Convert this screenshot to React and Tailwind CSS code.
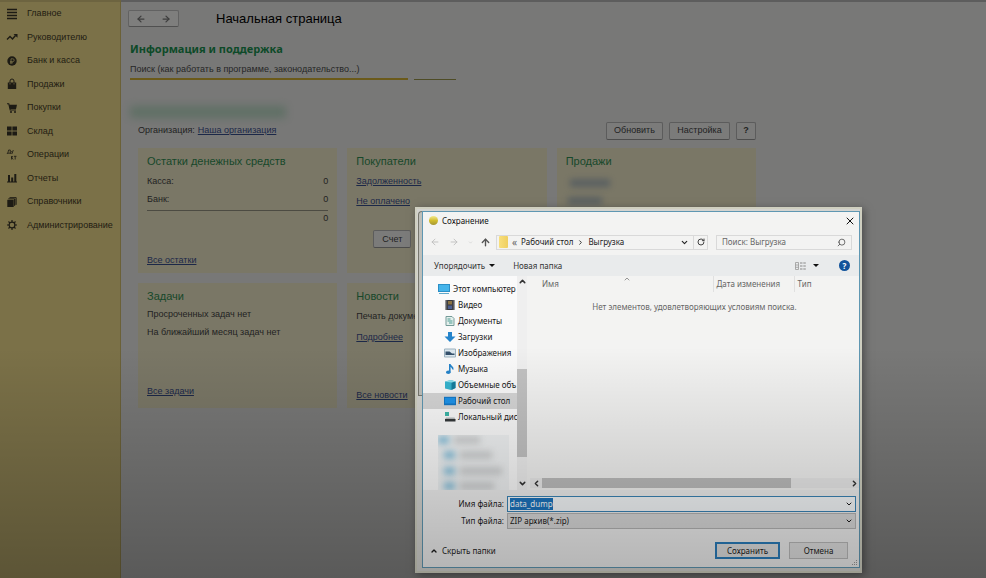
import React, { useEffect, useRef } from 'react';
import { ArrowLeft, ArrowRight, ArrowUp, ChevronDown, ChevronUp, ChevronLeft, ChevronRight, RotateCw, Search, X } from 'lucide-react';

const SECTIONS = [
  { id: 'main', label: 'Главное' },
  { id: 'manager', label: 'Руководителю' },
  { id: 'bank', label: 'Банк и касса' },
  { id: 'sales', label: 'Продажи' },
  { id: 'purchases', label: 'Покупки' },
  { id: 'stock', label: 'Склад' },
  { id: 'operations', label: 'Операции' },
  { id: 'reports', label: 'Отчеты' },
  { id: 'catalogs', label: 'Справочники' },
  { id: 'admin', label: 'Администрирование' },
];

const FOLDERS = [
  { id: 'video', label: 'Видео' },
  { id: 'docs', label: 'Документы' },
  { id: 'downloads', label: 'Загрузки' },
  { id: 'images', label: 'Изображения' },
  { id: 'music', label: 'Музыка' },
  { id: 'objects', label: 'Объемные объ' },
  { id: 'desktop', label: 'Рабочий стол', active: true },
  { id: 'disk', label: 'Локальный дис' },
];

const SectionIcon = ({ id }) => {
  const getShape = () => {
    switch (id) {
      case 'main':
        return <path d="M0 .5h10M0 3.500h10M0 6.500h10M0 9.500h10" stroke="currentColor" strokeWidth="1.300" />;
      case 'manager':
        return (
          <>
            <path d="M0 7.500l3-3 2.500 2.500L8.500 3.500" fill="none" stroke="currentColor" strokeWidth="1.4" />
            <path d="M6.500 2H10.500v3.800z" fill="currentColor" />
          </>
        );
      case 'bank':
        return (
          <>
            <circle cx="5" cy="5" r="4.7" fill="currentColor" />
            <path d="M4 8V2.8h1.8a1.4 1.4 0 010 2.8H3M3 6.8h3" fill="none" stroke="#7b7148" strokeWidth=".8" />
          </>
        );
      case 'sales':
        return (
          <>
            <path d="M.8 3.5h8.4V10H.8z" fill="currentColor" />
            <path d="M3 5V2a2 2 0 014 0v3" fill="none" stroke="currentColor" />
            <path d="M3 4v1.500M7 4v1.500" stroke="#7b7148" strokeWidth=".7" />
          </>
        );
      case 'purchases':
        return (
          <>
            <path d="M0 .8h1.8L3.2 7H9" fill="none" stroke="currentColor" strokeWidth="1.1" />
            <path d="M2 1.7h8L9 6H3z" fill="currentColor" />
            <circle cx="4" cy="9" r="1" fill="currentColor" />
            <circle cx="8" cy="9" r="1" fill="currentColor" />
          </>
        );
      case 'stock':
        return <path d="M0 .5h4.6v4H0zM5.4.5H10v4H5.4zM0 5.4h4.6v4H0zM5.4 5.4H10v4H5.4z" fill="currentColor" />;
      case 'operations':
        return (
          <path
            d="M.3 4V3.200h.5L1.600 0h1.700v3.200h.6V4M.8 3.200h2.500M4.500 1l.8 1.800L6.300 0M5.300 2.800L4.800 4M4.500 6v3.500M4.500 8L6 6M4.800 7.600L6.200 9.500M7 6.300h2.500M8.200 6.300v3.200"
            fill="none"
            stroke="currentColor"
            strokeWidth=".8"
          />
        );
      case 'reports':
        return <path d="M1 2h2v7H1zM4.200 4.500h2V9h-2zM7.300 1h2v8h-2zM0 8.500h10v1H0z" fill="currentColor" />;
      case 'catalogs':
        return (
          <>
            <path d="M.3 2.800h6.400V10H.3z" fill="currentColor" />
            <path d="M1.300 1.800h6.200v7M2.500.6h6.700v7.200" fill="none" stroke="currentColor" strokeWidth=".9" />
            <path d="M7.400 1.800h1.500v6.500H7.400z" fill="currentColor" opacity=".5" />
          </>
        );
      default:
        return (
          <>
            <circle cx="5" cy="5" r="2.900" fill="none" stroke="currentColor" strokeWidth="1.200" />
            <path
              d="M5 0v2M5 8v2M0 5h2M8 5h2M1.500 1.500l1.300 1.300M7.200 7.200l1.300 1.300M8.500 1.500L7.200 2.800M2.800 7.200L1.500 8.500"
              stroke="currentColor"
              strokeWidth="1.200"
            />
          </>
        );
    }
  };

  return (
    <svg viewBox="0 0 10 10" className="size-[10px] shrink-0 overflow-visible text-[#1d1b14]">
      {getShape()}
    </svg>
  );
};

const FolderIcon = ({ id }) => {
  const getShape = () => {
    switch (id) {
      case 'computer':
        return (
          <>
            <path d="M0 0h12v8H0z" fill="#2b8fc6" />
            <path d="M1 1h10v6H1z" fill="#45b4ea" />
            <path d="M1 9.500h10" stroke="#5fa9cc" />
          </>
        );
      case 'video':
        return (
          <>
            <path d="M1.500 0h9v10h-9z" fill="#33353c" />
            <path d="M4 1h4v3.500H4z" fill="#8a7345" />
            <path d="M4 5.500h4V9H4z" fill="#4c5f91" />
            <path d="M2.700.5v9M9.300.5v9" stroke="#999" strokeDasharray="1 1" />
          </>
        );
      case 'docs':
        return (
          <>
            <path d="M2 .5h6L10 2.500v7H2z" fill="#e4efec" stroke="#749b98" />
            <path d="M3.500 3h3M3.500 5h5M5 7h3.500" stroke="#4b9b92" />
          </>
        );
      case 'downloads':
        return <path d="M4 0h4v4.500h3.500L6 10 .5 4.500H4z" fill="#2584cb" />;
      case 'images':
        return (
          <>
            <path d="M.5 1h11v8H.5z" fill="#dbe7ee" stroke="#9db3c0" />
            <path d="M1.500 3.500h4L8 5.500h2.500v1.500h-9z" fill="#34506b" />
          </>
        );
      case 'music':
        return (
          <>
            <path d="M5.800 0v8M5.800 0c0 2.500 3.500 2.500 3 5.500" fill="none" stroke="#2584cb" strokeWidth="1.600" />
            <ellipse cx="4.300" cy="8.300" rx="2.300" ry="1.700" fill="#2584cb" />
          </>
        );
      case 'objects':
        return (
          <>
            <path d="M1 1.500L7 0l4.500 1.500V8L7 10 1 8.500z" fill="#35b4cf" />
            <path d="M7.500 2.500l4-1V8l-4 2z" fill="#167e9d" />
            <path d="M1 1.500L7 0l4.500 1.500-4 1z" fill="#8fe0ec" />
          </>
        );
      case 'desktop':
        return (
          <>
            <path d="M0 .8h12v8.400H0z" fill="#1577c4" />
            <path d="M1 1.800h10v5.700H1z" fill="#1d93ea" />
          </>
        );
      default:
        return (
          <>
            <path d="M1 0h4v4H1z" fill="#3cb6a8" />
            <path d="M2 5.500h8.500l1 2H1z" fill="#b6bbbd" />
            <path d="M1 7h10.500v2.500H1z" fill="#34383a" />
          </>
        );
    }
  };

  return (
    <svg viewBox="0 0 12 10" className="h-[10px] w-3 shrink-0">
      {getShape()}
    </svg>
  );
};

const TextLink = ({ children }) => (
  <a href="#" className="text-[#1c2848] underline underline-offset-1">
    {children}
  </a>
);

const GrayButton = ({ children, className = '' }) => (
  <button
    className={`h-[18px] rounded-[2px] border border-[#5c5c5c] border-b-[#4c4c4c] bg-[#7b7b7a] text-[9px] text-[#222] ${className}`}
  >
    {children}
  </button>
);

const Card = ({ title, children }) => (
  <section className="flex flex-col bg-[#7a7766] px-[9px] pt-[5px]">
    <h3 className="mb-px text-[11px] leading-4 text-[#17482a]">{title}</h3>
    {children}
  </section>
);

const Sidebar = () => (
  <nav className="w-[121px] shrink-0 border-t-2 border-r border-t-[#6d6440] border-r-[#6b6138] bg-[#7b7148]">
    <ul className="grid h-[235px] auto-rows-fr">
      {SECTIONS.map((item) => (
        <li key={item.id} className="flex">
          <a href="#" className="flex items-center gap-[10px] pl-[7px] text-[9px] text-[#1f1c12]">
            <SectionIcon id={item.id} />
            {item.label}
          </a>
        </li>
      ))}
    </ul>
  </nav>
);

const HomePage = () => (
  <main className="min-w-0 flex-1 border-t-2 border-[#5d5d5d] pl-[7px]">
    <div className="flex h-[33px] items-center">
      <div className="flex h-[17px] w-[51px] items-center rounded-[2px] border border-[#626262] border-b-[#505050] bg-[#7e7e7d] text-[#3e3e3e]">
        <button aria-label="Назад" className="flex flex-1 justify-center">
          <ArrowLeft size={10} strokeWidth={3} />
        </button>
        <button aria-label="Вперед" className="flex flex-1 justify-center">
          <ArrowRight size={10} strokeWidth={3} />
        </button>
      </div>
      <h1 className="ml-[37px] text-[13px] text-black">Начальная страница</h1>
    </div>

    <div className="pl-[2px]">
      <h2 className="mt-[6px] font-['Noto_Sans','Liberation_Sans',sans-serif] text-[11px] leading-4 font-bold text-[#0d4a28]">
        Информация и поддержка
      </h2>
      <div className="mt-[4px] flex items-end gap-[6px]">
        <input
          type="text"
          aria-label="Поиск"
          placeholder="Поиск (как работать в программе, законодательство...)"
          className="h-[19px] w-[278px] border-b-2 border-[#6b5a1a] pb-px text-[9px] outline-none placeholder:text-[#262626]"
        />
        <span className="w-[42px] border-b border-[#4e4c26]" />
      </div>
      <div className="mt-[26px] h-3 w-[156px] bg-[#4f6a59] opacity-60 blur-[4px]" />
    </div>

    <div className="ml-[10px] max-w-[618px]">
      <div className="mt-[4px] flex h-[18px] items-center text-[9px] text-[#222]">
        <span className="mr-[3px]">Организация:</span>
        <TextLink>Наша организация</TextLink>
        <div className="ml-auto flex gap-[6px]">
          <GrayButton className="w-[57px]">Обновить</GrayButton>
          <GrayButton className="w-[61px]">Настройка</GrayButton>
          <GrayButton className="w-5 font-bold">?</GrayButton>
        </div>
      </div>

      <div className="mt-[8px] grid auto-rows-[125px] grid-cols-3 gap-[10px] text-[9px] leading-3 text-[#222]">
        <Card title="Остатки денежных средств">
          <dl className="mt-[5px]">
            <div className="flex h-[18px] justify-between">
              <dt>Касса:</dt>
              <dd>0</dd>
            </div>
            <div className="flex h-[18px] justify-between border-b border-[#4c4b42]">
              <dt>Банк:</dt>
              <dd>0</dd>
            </div>
            <dd className="pt-px text-right">0</dd>
          </dl>
          <p className="mt-auto mb-[7px]">
            <TextLink>Все остатки</TextLink>
          </p>
        </Card>
        <Card title="Покупатели">
          <p className="mt-[5px]">
            <TextLink>Задолженность</TextLink>
          </p>
          <p className="mt-[8px]">
            <TextLink>Не оплачено</TextLink>
          </p>
          <GrayButton className="mt-[23px] ml-[17px] w-[38px]">Счет</GrayButton>
        </Card>
        <Card title="Продажи">
          <div className="mt-[9px] ml-[4px] h-2 w-[40px] bg-[#4d5760] opacity-70 blur-[3px]" />
          <div className="mt-[10px] ml-[2px] h-2 w-[34px] bg-[#4d5760] opacity-70 blur-[3px]" />
        </Card>
        <Card title="Задачи">
          <p className="mt-[3px]">Просроченных задач нет</p>
          <p className="mt-[6px]">На ближайший месяц задач нет</p>
          <p className="mt-auto mb-[11px]">
            <TextLink>Все задачи</TextLink>
          </p>
        </Card>
        <Card title="Новости">
          <p className="mt-[5px]">Печать документов</p>
          <p className="mt-[9px]">
            <TextLink>Подробнее</TextLink>
          </p>
          <p className="mt-auto mb-[7px]">
            <TextLink>Все новости</TextLink>
          </p>
        </Card>
      </div>
    </div>
  </main>
);

const FolderTree = () => (
  <div className="flex w-[104px] shrink-0 bg-[#fafafa]">
    <div className="min-w-0 flex-1 overflow-hidden pt-[5px] text-[#161616]">
      <div className="flex h-4 items-center gap-[3px] pl-[15px] whitespace-nowrap">
        <FolderIcon id="computer" />
        Этот компьютер
      </div>
      <ul>
        {FOLDERS.map((folder) => (
          <li
            key={folder.id}
            className={`flex h-4 items-center gap-[2px] pl-[21px] whitespace-nowrap ${folder.active ? 'bg-[#d6d6d6]' : ''}`}
          >
            <FolderIcon id={folder.id} />
            {folder.label}
          </li>
        ))}
      </ul>
      <div className="mt-[10px] mr-[8px] ml-[15px] flex h-[56px] flex-col justify-between overflow-hidden bg-[#f0f2f3] py-px">
        {[26, 32, 42, 34].map((width, index) => (
          <div key={index} className={`flex gap-[5px] blur-[3px] ${index ? 'pl-[6px]' : ''}`}>
            <span className="h-2 w-[11px] bg-[#8cc4de]" />
            <span className="h-2 bg-[#cfd1d2]" style={{ width }} />
          </div>
        ))}
      </div>
    </div>
    <div className="flex w-[10px] flex-col items-center bg-[#efefef] text-[#333]">
      <ChevronUp size={9} strokeWidth={4} className="mt-px" />
      <div className="mt-[83px] h-[88px] w-full bg-[#c2c2c2]" />
      <ChevronDown size={9} strokeWidth={4} className="mt-auto mb-[2px]" />
    </div>
  </div>
);

const SaveDialog = () => {
  const nameRef = useRef(null);

  useEffect(() => {
    nameRef.current.focus();
    nameRef.current.select();
  }, []);

  return (
    <div className="absolute top-[207px] left-[415px] w-[447px] border-2 border-[#cfcfc0] bg-[#d3d3cf] pt-[2px] pb-[3px] pl-[5px] shadow-[2px_2px_8px_#4a4a4a]">
      {/* Edge of the window behind the dialog */}
      <div className="absolute top-[2px] left-px h-[185px] w-1 rounded-tl-[4px] border-t border-b border-l border-[#77776e] bg-[#bfbfba]" />
      <div
        role="dialog"
        aria-label="Сохранение"
        className="relative flex h-[357px] flex-col border border-[#5f97b2] bg-[#f3f3f2] font-['Noto_Sans','Open_Sans',sans-serif] text-[8px] leading-3"
      >
        <div className="flex h-[17px] shrink-0 items-center pr-[3px] pl-[6px] text-[#111]">
          <span className="mr-1 size-[9px] rounded-full bg-linear-to-b from-[#f4e98a] via-[#d1bd2c] to-[#a59734]" />
          Сохранение
          <button aria-label="Закрыть" className="ml-auto">
            <X size={12} strokeWidth={2} />
          </button>
        </div>

        <div className="flex h-[26px] shrink-0 items-center pr-[7px] text-[#222]">
          <div className="flex w-[73px] shrink-0 items-center gap-[9px] pl-[7px] text-[#bbb]">
            <ArrowLeft size={10} />
            <ArrowRight size={10} />
            <ChevronDown size={5} />
            <ArrowUp size={11} strokeWidth={3} className="ml-[-2px] text-[#555]" />
          </div>
          <div className="flex h-[15px] flex-1 items-center gap-[4px] border border-[#d9d9d9] pl-[2px]">
            <span className="h-3 w-[9px] rounded-[1px] bg-linear-to-r from-[#f8df7c] to-[#efcf60]" />
            <span className="text-[10px] text-[#666]">«</span>
            <span>Рабочий стол</span>
            <ChevronRight size={7} strokeWidth={3} />
            <span>Выгрузка</span>
            <ChevronDown size={9} strokeWidth={3} className="ml-auto" />
            <button
              aria-label="Обновить"
              className="flex h-full w-[14px] items-center justify-center border-l border-[#d9d9d9] text-[#444]"
            >
              <RotateCw size={8} strokeWidth={3} />
            </button>
          </div>
          <label className="ml-[8px] flex h-[15px] w-[136px] items-center border border-[#d9d9d9] pr-[5px] pl-[5px]">
            <input
              type="text"
              aria-label="Поиск: Выгрузка"
              placeholder="Поиск: Выгрузка"
              className="min-w-0 flex-1 outline-none placeholder:text-[#666]"
            />
            <Search size={9} strokeWidth={2} className="-scale-x-100 text-[#444]" />
          </label>
        </div>

        <div className="flex h-[21px] shrink-0 items-center bg-[#e9ebec] pr-[9px] pl-[11px] text-[#333]">
          <button className="flex items-center gap-1">
            Упорядочить
            <svg viewBox="0 0 6 3" className="h-[3px] w-[6px]">
              <path d="M0 0h6L3 3z" fill="#111" />
            </svg>
          </button>
          <button className="ml-[18px]">Новая папка</button>
          <button aria-label="Вид" className="ml-auto flex items-center gap-[7px]">
            <svg viewBox="0 0 11 8" className="h-2 w-[11px]">
              <path d="M.5.500h3v7h-3zM.5 3h3M.5 5.300h3" fill="none" stroke="#999" strokeWidth=".8" />
              <path d="M5 1h6M5 4h6M5 7h6" stroke="#888" strokeDasharray="2.500 .8" />
            </svg>
            <svg viewBox="0 0 6 3" className="h-[3px] w-[6px]">
              <path d="M0 0h6L3 3z" fill="#111" />
            </svg>
          </button>
          <button
            aria-label="Справка"
            className="ml-5 flex size-[11px] items-center justify-center rounded-full bg-[#12539b] font-bold text-white"
          >
            ?
          </button>
        </div>

        <div className="flex h-[214px] shrink-0">
          <FolderTree />
          <div className="flex min-w-0 flex-1 flex-col pl-[3px]">
            <table className="w-full table-fixed text-left text-[#666]">
              <thead>
                <tr className="h-[16px]">
                  <th className="pl-3 font-normal">
                    <div className="flex items-start">
                      Имя
                      <ChevronUp size={8} className="mt-[-3px] ml-[64px]" />
                    </div>
                  </th>
                  <th className="w-[81px] border-l border-[#e0e0e0] pl-[3px] font-normal">Дата изменения</th>
                  <th className="w-[65px] border-l border-[#e0e0e0] pl-[3px] font-normal">Тип</th>
                </tr>
              </thead>
              <tbody>
                <tr>
                  <td colSpan={3} className="pt-[9px] text-center">
                    Нет элементов, удовлетворяющих условиям поиска.
                  </td>
                </tr>
              </tbody>
            </table>
            <div className="mt-auto mb-[2px] flex h-[10px] items-center bg-[#ebebeb] text-[#333]">
              <ChevronLeft size={9} strokeWidth={4} className="ml-[2px]" />
              <div className="ml-px h-full w-[249px] bg-[#bdbdbd]" />
              <ChevronRight size={9} strokeWidth={4} className="ml-auto" />
            </div>
          </div>
        </div>

        <div className="flex flex-1 flex-col bg-[#efefef] pt-[6px] text-[#1c1c1c]">
          <div className="flex items-center pr-[3px]">
            <label htmlFor="file-name" className="w-[84px] pr-[3px] text-right">
              Имя файла:
            </label>
            <div className="flex h-4 flex-1 items-center border border-[#3a84b6] bg-[#f6f9fb] pr-[2px] pl-[2px]">
              <input
                id="file-name"
                ref={nameRef}
                type="text"
                defaultValue="data_dump"
                className="min-w-0 flex-1 outline-none selection:bg-[#1b73bd] selection:text-white"
              />
              <ChevronDown size={8} strokeWidth={3} />
            </div>
          </div>
          <div className="mt-px flex items-center pr-[3px]">
            <label htmlFor="file-type" className="w-[84px] pr-[3px] text-right">
              Тип файла:
            </label>
            <div className="relative h-4 flex-1">
              <select id="file-type" className="h-full w-full appearance-none border border-[#b5b5b5] bg-[#dadada] pl-[2px]">
                <option>ZIP архив(*.zip)</option>
              </select>
              <ChevronDown size={8} strokeWidth={3} className="pointer-events-none absolute top-1 right-[3px]" />
            </div>
          </div>
          <div className="mt-[13px] flex items-center pr-[11px] pl-[7px]">
            <button className="flex items-center gap-1">
              <ChevronUp size={8} strokeWidth={4} />
              Скрыть папки
            </button>
            <button className="ml-auto h-[17px] w-[65px] border-2 border-[#2b7dbb] bg-[#e1e1e1]">Сохранить</button>
            <button className="ml-[9px] h-[17px] w-[59px] border border-[#bbb] bg-[#e1e1e1]">Отмена</button>
          </div>
          <svg viewBox="0 0 6 6" className="mt-auto mr-px mb-px ml-auto size-[6px]">
            <path d="M4 0h1v1H4zM2 2h1v1H2zM4 2h1v1H4zM0 4h1v1H0zM2 4h1v1H2zM4 4h1v1H4z" fill="#999" />
          </svg>
        </div>
      </div>
    </div>
  );
};

const App = () => (
  <div className="relative flex min-h-screen overflow-hidden bg-[#787877] font-['Liberation_Sans',Arial,sans-serif]">
    <Sidebar />
    <HomePage />
    <SaveDialog />
    {/* Dimming toward the bottom edge */}
    <div className="pointer-events-none absolute inset-0 bg-linear-to-b from-transparent from-60% to-black/25" />
  </div>
);

export default App;
